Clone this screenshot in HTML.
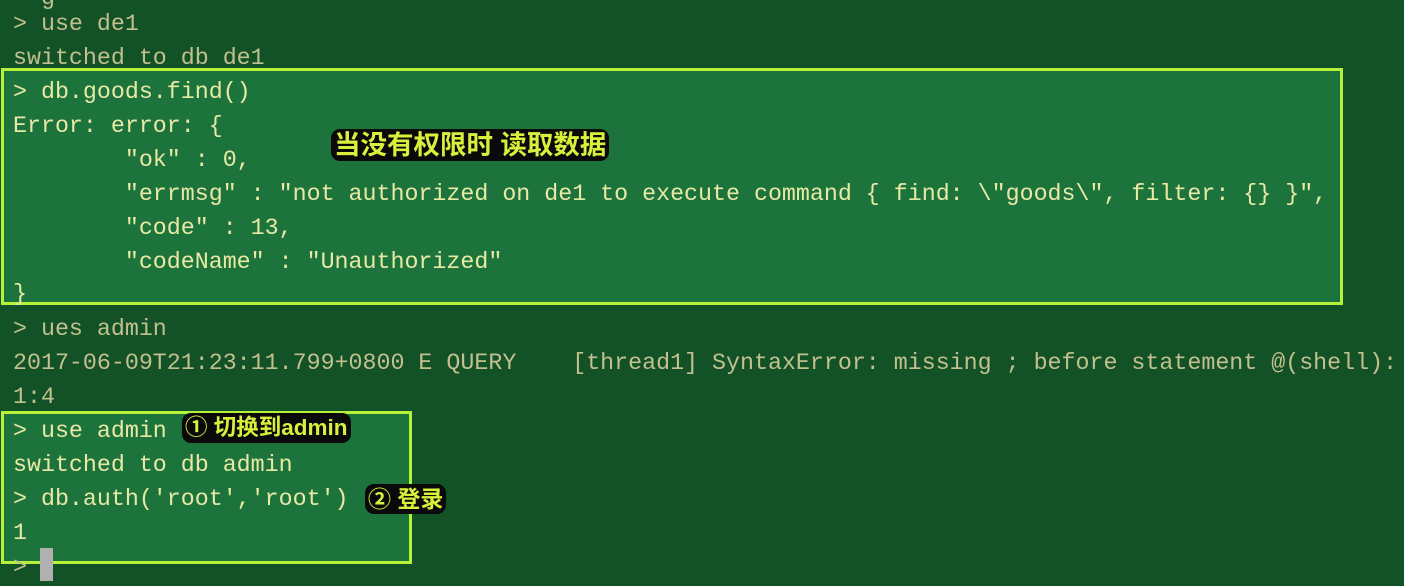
<!DOCTYPE html>
<html><head><meta charset="utf-8"><style>
html,body{margin:0;padding:0;}
body{width:1404px;height:586px;background:#135127;position:relative;overflow:hidden;font-family:"Liberation Mono","DejaVu Sans Mono",monospace;font-size:23.3px;}
.l{position:absolute;left:13px;white-space:pre;color:#c2c08e;line-height:34px;}
.in{color:#e9e9a6;}
.box{position:absolute;background:#1c733c;border:3px solid #b6f23a;box-sizing:border-box;}
.ann{position:absolute;font-family:"Liberation Sans","Noto Sans CJK SC",sans-serif;font-weight:bold;color:#d8f03c;background:#0a0a0a;border-radius:9px;padding:0 3px;line-height:30px;font-size:25px;white-space:pre;}
.cur{position:absolute;left:40px;top:548px;width:13px;height:33px;background:#b0b0b0;}
</style></head><body>
<div class="l" style="top:-19px">  g</div>
<div class="l" style="top:7px">&gt; use de1</div>
<div class="l" style="top:41px">switched to db de1</div>
<div class="box" style="left:1px;top:68px;width:1342px;height:237px;"></div>
<div class="l in" style="top:75px">&gt; db.goods.find()</div>
<div class="l in" style="top:109px">Error: error: {</div>
<div class="l in" style="top:143px">        "ok" : 0,</div>
<div class="l in" style="top:177px">        "errmsg" : "not authorized on de1 to execute command { find: \"goods\", filter: {} }",</div>
<div class="l in" style="top:211px">        "code" : 13,</div>
<div class="l in" style="top:245px">        "codeName" : "Unauthorized"</div>
<div class="l in" style="top:277px">}</div>
<div class="ann" style="left:331px;top:129px;font-size:26.5px;line-height:32px;">当没有权限时 读取数据</div>
<div class="l" style="top:312px">&gt; ues admin</div>
<div class="l" style="top:346px">2017-06-09T21:23:11.799+0800 E QUERY    [thread1] SyntaxError: missing ; before statement @(shell):</div>
<div class="l" style="top:380px">1:4</div>
<div class="box" style="left:1px;top:411px;width:411px;height:153px;"></div>
<div class="l in" style="top:414px">&gt; use admin</div>
<div class="l in" style="top:448px">switched to db admin</div>
<div class="l in" style="top:482px">&gt; db.auth('root','root')</div>
<div class="l in" style="top:516px">1</div>
<div class="l" style="top:550px">&gt;</div>
<div class="cur"></div>
<div class="ann" style="left:182px;top:413px;font-size:22.5px;">① 切换到admin</div>
<div class="ann" style="left:365px;top:484px;font-size:23px;">② 登录</div>
</body></html>
